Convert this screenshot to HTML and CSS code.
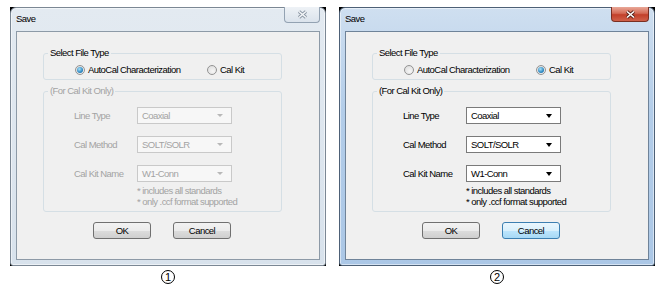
FILE: index.html
```html
<!DOCTYPE html>
<html lang="en">
<head>
  <meta charset="UTF-8">
  <title>Save dialog states</title>
  <link rel="stylesheet" href="styles.css">
</head>
<body>
<div class="screen">

  <figure class="shot">
    <div class="mask">
      <div class="window inactive">
        <div class="titlebar">
          <span class="title">Save</span>
          <span class="close">
            <svg width="11" height="9" viewBox="0 0 11 9"><path d="M2 1.5 L9 7.5 M9 1.5 L2 7.5" class="x-out"/><path d="M2 1.5 L9 7.5 M9 1.5 L2 7.5" class="x-in"/></svg>
          </span>
        </div>
        <div class="client">
          <fieldset class="group">
            <legend>Select File Type</legend>
            <div class="radios">
              <label class="radio first"><span class="dot checked"></span>AutoCal Characterization</label>
              <label class="radio"><span class="dot"></span>Cal Kit</label>
            </div>
          </fieldset>
          <fieldset class="group kit disabled">
            <legend>(For Cal Kit Only)</legend>
            <div class="rows">
              <span class="row-label">Line Type</span>
              <span class="combo"><span>Coaxial</span><i class="arrow"></i></span>
              <span class="row-label">Cal Method</span>
              <span class="combo"><span>SOLT/SOLR</span><i class="arrow"></i></span>
              <span class="row-label">Cal Kit Name</span>
              <span class="combo"><span>W1-Conn</span><i class="arrow"></i></span>
            </div>
            <div class="notes">* includes all standards<br>* only .ccf format supported</div>
          </fieldset>
          <div class="buttons">
            <button class="btn">OK</button>
            <button class="btn">Cancel</button>
          </div>
        </div>
      </div>
    </div>
    <figcaption><span class="num">1</span></figcaption>
  </figure>

  <figure class="shot">
    <div class="mask">
      <div class="window active">
        <div class="titlebar">
          <span class="title">Save</span>
          <span class="close">
            <svg width="11" height="9" viewBox="0 0 11 9"><path d="M2 1.5 L9 7.5 M9 1.5 L2 7.5" class="x-out"/><path d="M2 1.5 L9 7.5 M9 1.5 L2 7.5" class="x-in"/></svg>
          </span>
        </div>
        <div class="client">
          <fieldset class="group">
            <legend>Select File Type</legend>
            <div class="radios">
              <label class="radio first"><span class="dot"></span>AutoCal Characterization</label>
              <label class="radio"><span class="dot checked"></span>Cal Kit</label>
            </div>
          </fieldset>
          <fieldset class="group kit">
            <legend>(For Cal Kit Only)</legend>
            <div class="rows">
              <span class="row-label">Line Type</span>
              <span class="combo"><span>Coaxial</span><i class="arrow"></i></span>
              <span class="row-label">Cal Method</span>
              <span class="combo"><span>SOLT/SOLR</span><i class="arrow"></i></span>
              <span class="row-label">Cal Kit Name</span>
              <span class="combo"><span>W1-Conn</span><i class="arrow"></i></span>
            </div>
            <div class="notes">* includes all standards<br>* only .ccf format supported</div>
          </fieldset>
          <div class="buttons">
            <button class="btn">OK</button>
            <button class="btn focused">Cancel</button>
          </div>
        </div>
      </div>
    </div>
    <figcaption><span class="num">2</span></figcaption>
  </figure>

</div>
</body>
</html>
```

FILE: styles.css
```css
body {
  margin: 0;
  background: #fff;
  font-family: "Liberation Sans", Arial, sans-serif;
  font-size: 9.5px;
  letter-spacing: -0.55px;
  color: #1a1a1a;
}
.screen {
  display: flex;
  gap: 13px;
  padding: 7px 0 0 10px;
}
.shot {
  margin: 0;
  width: 316px;
  display: flex;
  flex-direction: column;
  align-items: center;
}
.mask {
  background: #000;
  width: 316px;
  height: 259px;
}
.window {
  box-sizing: border-box;
  height: 259px;
  border: 1px solid #7b8794;
  border-radius: 6px 6px 3px 3px;
  padding: 0 5px 5px;
  box-shadow: inset 0 0 0 1px rgba(255, 255, 255, 0.5);
}
.window.inactive {
  background: linear-gradient(#e3eaf1, #d8e2ec);
}
.window.active {
  border-color: #4d6076;
  background: linear-gradient(#cfdff0, #b3cde9 40%, #abc7e6);
}
.titlebar {
  height: 23px;
  display: flex;
  justify-content: space-between;
  align-items: flex-start;
}
.title {
  margin-top: 5px;
  color: #000;
}
.close {
  box-sizing: border-box;
  width: 36px;
  height: 16px;
  margin-top: -1px;
  border: 1px solid #93a2b2;
  border-top: none;
  border-radius: 0 0 4px 4px;
  background: linear-gradient(#eef2f6, #dbe3ec);
  display: flex;
  align-items: center;
  justify-content: center;
}
.close .x-out {
  stroke: #8b97a4;
  stroke-width: 3.4;
  fill: none;
}
.close .x-in {
  stroke: #f4f6f8;
  stroke-width: 1.6;
  fill: none;
}
.active .close {
  width: 38px;
  height: 15px;
  border-color: #7a2f22;
  background: linear-gradient(#e9a898, #d46a55 45%, #c2402a 55%, #d0614a);
}
.active .close .x-out {
  stroke: #5a2218;
}
.active .close .x-in {
  stroke: #fff;
}
.client {
  box-sizing: border-box;
  height: 229px;
  background: #f0f0f0;
  border: 1px solid #8d9aa7;
}
.active .client {
  border-color: #6f8399;
}
.group {
  box-sizing: border-box;
  width: 239px;
  margin: 15px 0 0 26px;
  padding: 5px 4px 3px;
  border: 1px solid #d5dfe5;
  border-radius: 3px;
  min-inline-size: 0;
}
.group legend {
  padding: 0 2px;
  line-height: 12px;
  color: #000;
}
.radios {
  display: flex;
  margin-left: 27px;
  line-height: 12px;
}
.radio {
  display: flex;
  align-items: center;
  gap: 3px;
  color: #000;
}
.radio.first {
  width: 132px;
}
.dot {
  box-sizing: border-box;
  width: 10px;
  height: 10px;
  border-radius: 50%;
  border: 1px solid #939393;
  background: radial-gradient(circle at 60% 65%, #f6f6f6, #d9d9d9);
  display: flex;
  align-items: center;
  justify-content: center;
}
.dot.checked::before {
  content: '';
  width: 6px;
  height: 6px;
  border-radius: 50%;
  background: radial-gradient(circle at 40% 35%, #a8e2fa, #2f89c2 60%, #125a92);
}
.group.kit {
  margin-top: 5px;
  padding: 10px 4px 4px;
}
.rows {
  display: grid;
  grid-template-columns: 63px 95px;
  grid-auto-rows: 17px;
  row-gap: 12px;
  margin-left: 26px;
  align-items: center;
}
.row-label {
  color: #000;
}
.combo {
  box-sizing: border-box;
  height: 17px;
  display: flex;
  align-items: center;
  justify-content: space-between;
  padding: 0 8px 0 4px;
  background: #fff;
  border: 1px solid #7a7a7a;
  color: #000;
}
.arrow {
  width: 0;
  height: 0;
  border-left: 3.5px solid transparent;
  border-right: 3.5px solid transparent;
  border-top: 4px solid #000;
}
.notes {
  margin: 3px 0 0 89px;
  line-height: 11px;
  color: #000;
}
.disabled legend,
.disabled .row-label,
.disabled .notes,
.disabled .combo {
  color: #a3a3a3;
}
.disabled .combo {
  border-color: #c9c9c9;
  background: #f7f7f7;
}
.disabled .arrow {
  border-left-width: 3px;
  border-right-width: 3px;
  border-top: 3px solid #b8b8b8;
}
.buttons {
  display: flex;
  gap: 22px;
  margin: 10px 0 0 76px;
}
.btn {
  box-sizing: border-box;
  width: 58px;
  height: 17px;
  padding: 0;
  font: inherit;
  letter-spacing: inherit;
  color: #000;
  border: 1px solid #707070;
  border-radius: 3px;
  background: linear-gradient(#f2f2f2, #ebebeb 50%, #dddddd 50%, #cfcfcf);
}
.btn.focused {
  border-color: #3c7fb1;
  background: linear-gradient(#eaf6fd, #d9f0fc 50%, #bee6fd 50%, #a7d9f5);
}
figcaption {
  margin-top: 4px;
}
.num {
  box-sizing: border-box;
  width: 14px;
  height: 14px;
  border: 1px solid #000;
  border-radius: 50%;
  display: flex;
  align-items: center;
  justify-content: center;
  font-size: 11px;
  letter-spacing: 0;
  color: #000;
}
```
